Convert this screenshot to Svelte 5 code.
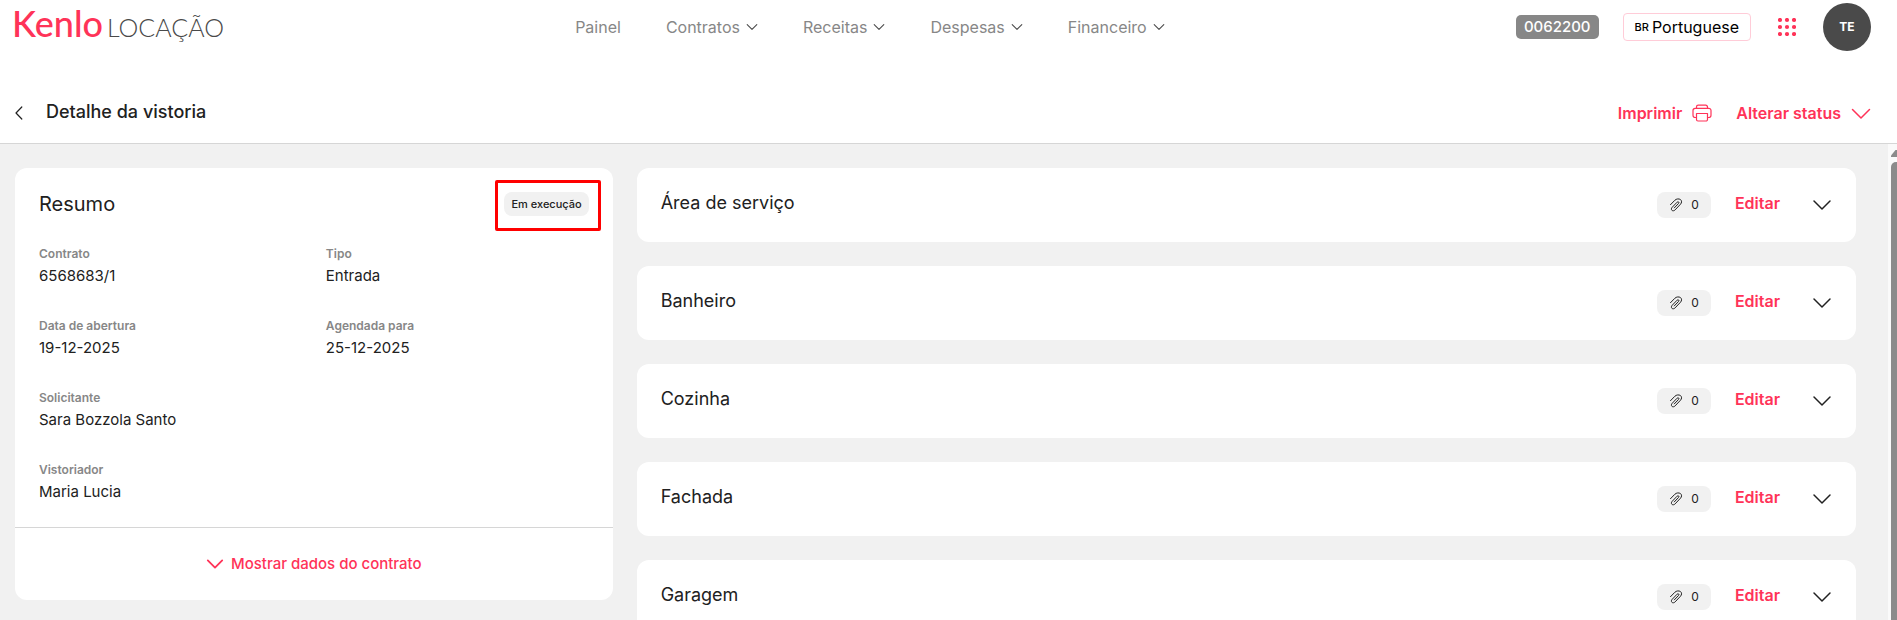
<script>
	const menu = [
		{ label: 'Painel', children: false },
		{ label: 'Contratos', children: true },
		{ label: 'Receitas', children: true },
		{ label: 'Despesas', children: true },
		{ label: 'Financeiro', children: true }
	];

	const fields = [
		{ label: 'Contrato', value: '6568683/1' },
		{ label: 'Tipo', value: 'Entrada' },
		{ label: 'Data de abertura', value: '19-12-2025' },
		{ label: 'Agendada para', value: '25-12-2025' },
		{ label: 'Solicitante', value: 'Sara Bozzola Santo', full: true },
		{ label: 'Vistoriador', value: 'Maria Lucia', full: true }
	];

	const rooms = [
		{ name: 'Área de serviço', files: 0 },
		{ name: 'Banheiro', files: 0 },
		{ name: 'Cozinha', files: 0 },
		{ name: 'Fachada', files: 0 },
		{ name: 'Garagem', files: 0 }
	];

	const dots = [2, 9, 16];
</script>

{#snippet chevron(size, stroke)}
	<svg width={size} height={size} viewBox="0 0 20 20" fill="none" stroke="currentColor" stroke-width={stroke} stroke-linecap="round" stroke-linejoin="round">
		<path d="M2 6l8 8 8-8" />
	</svg>
{/snippet}

<div class="page">
	<header class="topbar">
		<a class="logo" href="#inicio">
			<span class="logo-brand">Kenlo</span>
			<span class="logo-product">LOCAÇÃO</span>
		</a>

		<nav class="menu">
			{#each menu as item}
				<a href="#{item.label.toLowerCase()}">
					{item.label}
					{#if item.children}
						<span class="menu-arrow">{@render chevron(12, 1.8)}</span>
					{/if}
				</a>
			{/each}
		</nav>

		<div class="account">
			<span class="code">0062200</span>
			<button class="language"><small>BR</small>Portuguese</button>
			<button class="apps" aria-label="Aplicativos">
				<svg width="18" height="18" viewBox="0 0 18 18" fill="currentColor">
					{#each dots as cy}
						{#each dots as cx}
							<circle {cx} {cy} r="2.1" />
						{/each}
					{/each}
				</svg>
			</button>
			<button class="avatar">TE</button>
		</div>
	</header>

	<div class="titlebar">
		<button class="back" aria-label="Voltar">
			<svg width="8" height="14" viewBox="0 0 8 14" fill="none" stroke="currentColor" stroke-width="1.2" stroke-linecap="round" stroke-linejoin="round">
				<path d="M6.800 1L1 7l5.800 6" />
			</svg>
		</button>
		<h1>Detalhe da vistoria</h1>
		<div class="actions">
			<button>
				Imprimir
				<svg width="20" height="18" viewBox="0 0 20 18" fill="none" stroke="currentColor" stroke-width="1.2" stroke-linejoin="round">
					<path d="M4.500 4.500V3a1.800 1.800 0 0 1 1.800-1.800h7.400A1.800 1.800 0 0 1 15.500 3v1.500" />
					<path d="M4.500 13.500H3.200A2.200 2.200 0 0 1 1 11.300V6.500a2.200 2.200 0 0 1 2.200-2.200h13.600A2.200 2.200 0 0 1 19 6.500v4.800a2.200 2.200 0 0 1-2.200 2.200h-1.300" />
					<path d="M4.500 9.500h11v6a1.500 1.500 0 0 1-1.500 1.500H6a1.500 1.500 0 0 1-1.500-1.500z" />
				</svg>
			</button>
			<button>
				Alterar status
				<svg width="20" height="20" viewBox="0 0 20 20" fill="none" stroke="currentColor" stroke-width="1.5" stroke-linecap="round" stroke-linejoin="round">
					<path d="M1.500 6.500l8.500 8.500 8.500-8.500" />
				</svg>
			</button>
		</div>
	</div>

	<div class="body">
		<main class="content">
			<section class="summary">
				<div class="summary-main">
					<div class="summary-head">
						<h2>Resumo</h2>
						<span class="status">Em execução</span>
					</div>
					<dl>
						{#each fields as field}
							<div class:full={field.full}>
								<dt>{field.label}</dt>
								<dd>{field.value}</dd>
							</div>
						{/each}
					</dl>
				</div>
				<button class="show-more">
					{@render chevron(18, 2)}
					Mostrar dados do contrato
				</button>
			</section>

			<section class="rooms">
				{#each rooms as room}
					<article class="room">
						<h3>{room.name}</h3>
						<span class="files">
							<svg width="14" height="14" viewBox="0 0 14 14" fill="none" stroke="currentColor" stroke-linecap="round" stroke-linejoin="round">
								<path d="M1.500 6.700l4.300-4.400c1.600-1.600 4.200-1.800 5.700-.7 1.500 1.200 1.300 3.200 0 4.600l-5.400 5.700c-.9 1-2.400 1.200-3.200.4-.8-.8-.6-2.100.3-3l4.900-5.100c.5-.5 1.200-.6 1.600-.2.400.4.300 1-.2 1.500L5.300 9.900" />
							</svg>
							{room.files}
						</span>
						<button class="edit">Editar</button>
						<button class="toggle" aria-label="Expandir {room.name}">{@render chevron(20, 1.5)}</button>
					</article>
				{/each}
			</section>
		</main>

		<div class="scrollbar" aria-hidden="true">
			<svg width="12" height="8" viewBox="0 0 12 8" fill="currentColor">
				<path d="M4.500 1h3L12 6.500V8H0V6.500z" />
			</svg>
			<div class="thumb"></div>
		</div>
	</div>
</div>

<style>
	:global(body) {
		margin: 0;
		background: #ffffff;
	}

	.page {
		display: flex;
		flex-direction: column;
		height: 100vh;
		overflow: hidden;
		color: #212121;
		font-family: Inter, 'Open Sans', sans-serif;
		font-size: 16px;
		line-height: 24px;
	}

	button {
		display: flex;
		align-items: center;
		padding: 0;
		border: none;
		background: none;
		color: inherit;
		font: inherit;
		cursor: pointer;
	}

	a {
		color: inherit;
		text-decoration: none;
	}

	svg {
		display: block;
		flex-shrink: 0;
	}

	h1,
	h2,
	h3,
	dl,
	dd {
		margin: 0;
	}

	.topbar {
		display: flex;
		align-items: center;
		justify-content: space-between;
		flex-shrink: 0;
		height: 54px;
		padding: 0 26px 0 12px;
	}

	.logo {
		display: flex;
		align-items: baseline;
		gap: 4px;
		padding-bottom: 4px;
		font-family: Lato, sans-serif;
		line-height: 48px;
	}

	.logo-brand {
		color: #ff3358;
		font-size: 36px;
		font-weight: 500;
	}

	.logo-product {
		color: #4a4a4a;
		font-size: 25px;
		font-weight: 300;
	}

	.menu {
		display: flex;
		gap: 45px;
		color: #878787;
	}

	.menu a {
		display: flex;
		align-items: center;
		gap: 6px;
	}

	.menu-arrow {
		color: #4a4a4a;
	}

	.account {
		display: flex;
		align-items: center;
		gap: 24px;
	}

	.code {
		padding: 0 8px;
		border-radius: 5px;
		background: #878787;
		color: #ffffff;
		font-size: 15px;
		font-weight: 500;
	}

	.language {
		gap: 3px;
		padding: 1px 11px;
		border: 1px solid #ffccd8;
		border-radius: 4px;
		color: #000000;
	}

	.language small {
		font-size: 11px;
		font-weight: 500;
	}

	.apps {
		padding: 0 3px;
		color: #ff3358;
	}

	.avatar {
		justify-content: center;
		width: 48px;
		height: 48px;
		border-radius: 50%;
		background: #4a4a4a;
		color: #ffffff;
		font-size: 12px;
		font-weight: 700;
	}

	.titlebar {
		display: flex;
		align-items: center;
		flex-shrink: 0;
		height: 61px;
		margin-top: 28px;
		padding: 0 26px 0 15px;
		border-bottom: 1px solid #d6d6d6;
	}

	.back {
		margin-right: 23px;
	}

	h1 {
		padding-bottom: 2px;
		font-size: 18px;
		font-weight: 500;
	}

	.actions {
		display: flex;
		gap: 24px;
		margin-left: auto;
		color: #ff3358;
		font-weight: 600;
	}

	.actions button {
		gap: 10px;
	}

	.body {
		display: flex;
		flex: 1;
		min-height: 0;
		background: #f1f1f1;
	}

	.content {
		display: grid;
		grid-template-columns: repeat(12, minmax(0, 1fr));
		align-items: start;
		gap: 24px;
		flex: 1;
		padding: 24px 32px 24px 15px;
		overflow: hidden;
	}

	.summary {
		grid-column: span 4;
		border-radius: 12px;
		background: #ffffff;
	}

	.summary-main {
		padding: 24px 24px 23px;
	}

	.summary-head {
		display: flex;
		align-items: center;
		justify-content: space-between;
		margin-bottom: 28px;
	}

	h2 {
		font-size: 20px;
		font-weight: 400;
	}

	.status {
		position: relative;
		padding: 0 7px;
		border-radius: 8px;
		background: #f1f1f1;
		font-size: 11px;
		font-weight: 500;
	}

	/* red marker around the current status */
	.status::after {
		content: '';
		position: absolute;
		inset: -12px -12px -15px -9px;
		border: 3px solid #ff0000;
		border-radius: 2px;
	}

	dl {
		display: grid;
		grid-template-columns: 1fr 1fr;
		gap: 28px 24px;
	}

	.full {
		grid-column: span 2;
	}

	dt {
		color: #878787;
		font-size: 12px;
		font-weight: 600;
		line-height: 20px;
	}

	dd {
		font-size: 15px;
	}

	.show-more {
		justify-content: center;
		gap: 7px;
		width: 100%;
		padding: 24px;
		border-top: 1px solid #d6d6d6;
		color: #ff3358;
		font-size: 15px;
		font-weight: 500;
	}

	.rooms {
		grid-column: span 8;
		display: flex;
		flex-direction: column;
		gap: 24px;
	}

	.room {
		display: flex;
		align-items: center;
		padding: 23px 24px;
		border-radius: 12px;
		background: #ffffff;
	}

	h3 {
		flex: 1;
		padding-bottom: 4px;
		font-size: 18px;
		font-weight: 400;
	}

	.files {
		display: flex;
		align-items: center;
		gap: 8px;
		padding: 1px 12px;
		border-radius: 8px;
		background: #f1f1f1;
		font-size: 12px;
	}

	.edit {
		margin: 0 32px 0 24px;
		padding-bottom: 4px;
		color: #ff3358;
		font-weight: 600;
	}

	.scrollbar {
		width: 6px;
		padding: 5px 0 0 3px;
		overflow: hidden;
		background: #fafafa;
		color: #8b8b8b;
	}

	.thumb {
		width: 12px;
		height: 100%;
		margin-top: 5px;
		border-radius: 5px 0 0 0;
		background: #8b8b8b;
	}
</style>
